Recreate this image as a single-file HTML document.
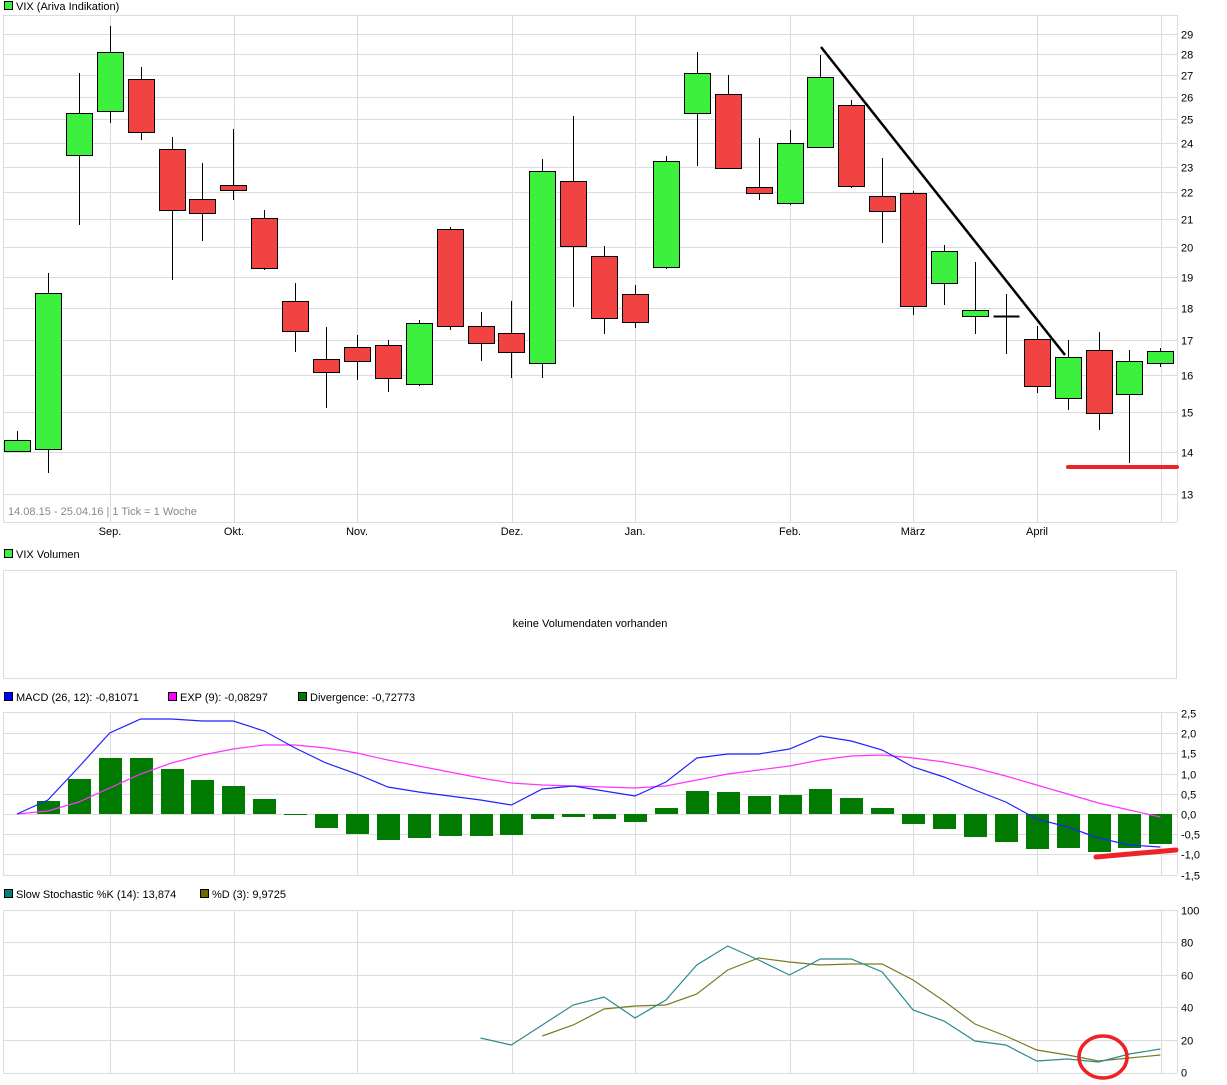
<!DOCTYPE html><html><head><meta charset="utf-8"><style>
body{margin:0;background:#fff;width:1227px;height:1085px;overflow:hidden;font-family:"Liberation Sans",Arial,sans-serif}
svg{position:absolute;left:0;top:0}
text{font-family:"Liberation Sans",Arial,sans-serif;font-size:11px;fill:#000}
</style></head><body>
<svg id="s" width="1227" height="1085" viewBox="0 0 1227 1085">
<g id="grid" stroke="#dcdcdc" stroke-width="1" fill="none"></g>
<g id="main"></g>
<rect x="4.5" y="1.5" width="8" height="8" fill="#3ef03e" stroke="#000"/>
<text x="16" y="10">VIX (Ariva Indikation)</text>
<text x="8" y="515" style="fill:#888">14.08.15 - 25.04.16 | 1 Tick = 1 Woche</text>
<g id="months"></g>
<rect x="4.5" y="549.5" width="8" height="8" fill="#3ef03e" stroke="#000"/>
<text x="16" y="558">VIX Volumen</text>
<rect x="3.5" y="570.5" width="1173" height="108" fill="none" stroke="#dcdcdc"/>
<text x="590" y="627" text-anchor="middle">keine Volumendaten vorhanden</text>
<rect x="4.5" y="692.5" width="8" height="8" fill="#0000ff" stroke="#000"/>
<text x="16" y="701">MACD (26, 12): -0,81071</text>
<rect x="168.5" y="692.5" width="8" height="8" fill="#ff00ff" stroke="#000"/>
<text x="180" y="701">EXP (9): -0,08297</text>
<rect x="298.5" y="692.5" width="8" height="8" fill="#007a00" stroke="#000"/>
<text x="310" y="701">Divergence: -0,72773</text>
<rect x="4.5" y="889.5" width="8" height="8" fill="#008080" stroke="#000"/>
<text x="16" y="898">Slow Stochastic %K (14): 13,874</text>
<rect x="200.5" y="889.5" width="8" height="8" fill="#6b6b00" stroke="#000"/>
<text x="212" y="898">%D (3): 9,9725</text>
</svg>
<script>
const S=document.getElementById('s'),G=document.getElementById('grid'),M=document.getElementById('main');
const NS='http://www.w3.org/2000/svg';
function el(p,t,a,txt){const e=document.createElementNS(NS,t);for(const k in a)e.setAttribute(k,a[k]);if(txt!==undefined)e.textContent=txt;p.appendChild(e);return e;}
const X=i=>17+30.9*i;
const vx=[3,110,234,357,512,635,790,913,1037,1161];
// panels
const panels=[[15,522],[712,875],[910,1073]];
panels.forEach(([t,b])=>{vx.forEach(x=>el(G,'line',{x1:x+.5,y1:t,x2:x+.5,y2:b}));el(G,'line',{x1:1177.5,y1:t,x2:1177.5,y2:b});el(G,'line',{x1:3,y1:b+.5,x2:1177,y2:b+.5});el(G,'line',{x1:3,y1:t+.5,x2:1177,y2:t+.5});});
// main price grid
const py=p=>34+(Math.log(29)-Math.log(p))*573.6;
for(let p=13;p<=29;p++){const y=Math.round(py(p))+.5;el(G,'line',{x1:3,y1:y,x2:1177,y2:y});el(S,'text',{x:1181,y:y+4},p);}
const mn=[['Sep.',110],['Okt.',234],['Nov.',357],['Dez.',512],['Jan.',635],['Feb.',790],['März',913],['April',1037]];
mn.forEach(([n,x])=>el(S,'text',{x:x,y:535,'text-anchor':'middle'},n));
// candles: color, bodyTop, bodyBot, wickTop, wickBot
const C=[['g',440,451,431,451],['g',293,449,273,473],['g',113,155,73,225],['g',52,111,26,123],['r',79,132,67,140],['r',149,210,137,280],['r',199,213,163,241],['r',185,190,129,200],['r',218,268,210,270],['r',301,331,283,352],['r',359,372,327,408],['r',347,361,335,380],['r',345,378,340,392],['g',323,384,320,386],['r',229,326,227,330],['r',326,343,312,361],['r',333,352,301,378],['g',171,363,159,378],['r',181,246,116,307],['r',256,318,246,334],['r',294,322,285,328],['g',161,267,156,269],['g',73,113,52,166],['r',94,168,75,168],['r',187,193,138,200],['g',143,203,130,205],['g',77,147,55,147],['r',105,186,100,188],['r',196,211,158,243],['r',193,306,191,315],['g',251,283,245,305],['g',310,316,262,334],['d',316,316,294,354],['r',339,386,326,393],['g',357,398,340,410],['r',350,413,332,430],['g',361,394,350,463],['g',351,363,348,367]];
C.forEach((c,i)=>{const x=Math.round(X(i))+.5;el(M,'line',{x1:x,y1:c[3],x2:x,y2:c[4],stroke:'#000'});
if(c[0]=='d'){el(M,'line',{x1:x-13,y1:c[1]+.5,x2:x+13,y2:c[1]+.5,stroke:'#000',"stroke-width":2});}
else el(M,'rect',{x:x-13,y:c[1]+.5,width:26,height:Math.max(c[2]-c[1],4),fill:c[0]=='g'?'#3ef03e':'#f24343',stroke:'#000'});});
el(M,'line',{x1:821,y1:47,x2:1065,y2:355,stroke:'#000','stroke-width':2.5});
el(M,'line',{x1:1068,y1:467,x2:1177,y2:467,stroke:'#ee2228','stroke-width':4,'stroke-linecap':'round'});
// MACD
const ml=['2,5','2,0','1,5','1,0','0,5','0,0','-0,5','-1,0','-1,5'];
ml.forEach((t,k)=>{const y=Math.round(713+k*20.2)+.5;if(k>0&&k<8)el(G,'line',{x1:3,y1:y,x2:1177,y2:y});el(S,'text',{x:1181,y:y+4},t);});
const bars=[814,801,779,758,758,769,780,786,799,815,828,834,840,838,836,836,835,819,817,819,822,808,791,792,796,795,789,798,808,824,829,837,842,849,848,852,848,844];
bars.forEach((v,i)=>{if(i==0)return;const x=Math.round(X(i));const t=Math.min(v,814),b=Math.max(v,814);el(M,'rect',{x:x-11,y:t,width:23,height:Math.max(b-t,1),fill:'#007a00'});});
const mac=[814,800,767,733,719,719,721,721,731,748,763,774,787,792,796,800,805,789,786,791,796,782,758,754,754,749,736,741,750,767,777,790,802,819,827,838,845,847];
const sig=[814,811,802,788,774,763,755,749,745,745,748,753,760,766,772,778,783,785,786,787,788,786,780,774,770,766,760,756,755,758,762,768,776,785,794,803,810,817];
const pl=(a,off,col)=>el(M,'polyline',{points:a.map((v,i)=>X(i+off).toFixed(1)+','+v).join(' '),fill:'none',stroke:col,'stroke-width':1.2});
pl(sig,0,'#ff33ff');pl(mac,0,'#2222ff');
el(M,'line',{x1:1096,y1:857,x2:1176,y2:850,stroke:'#ee2228','stroke-width':5,'stroke-linecap':'round'});
// Stoch
[100,80,60,40,20,0].forEach((v,k)=>{const y=Math.round(910+k*32.4)+.5;if(k>0&&k<5)el(G,'line',{x1:3,y1:y,x2:1177,y2:y});el(S,'text',{x:1181,y:y+4},v);});
const K=[1038,1045,1025,1005,997,1018,1000,965,946,960,975,959,959,972,1010,1021,1041,1045,1061,1059,1062,1054,1049];
const D=[1036,1025,1009,1006,1005,994,970,958,962,965,964,964,980,1001,1024,1036,1050,1055,1061,1058,1055];
pl(D,17,'#7a7a20');pl(K,15,'#2a8a8a');
el(M,'ellipse',{cx:1103,cy:1057,rx:24,ry:21,fill:'none',stroke:'#ee2228','stroke-width':3.5});
</script>
</body></html>
